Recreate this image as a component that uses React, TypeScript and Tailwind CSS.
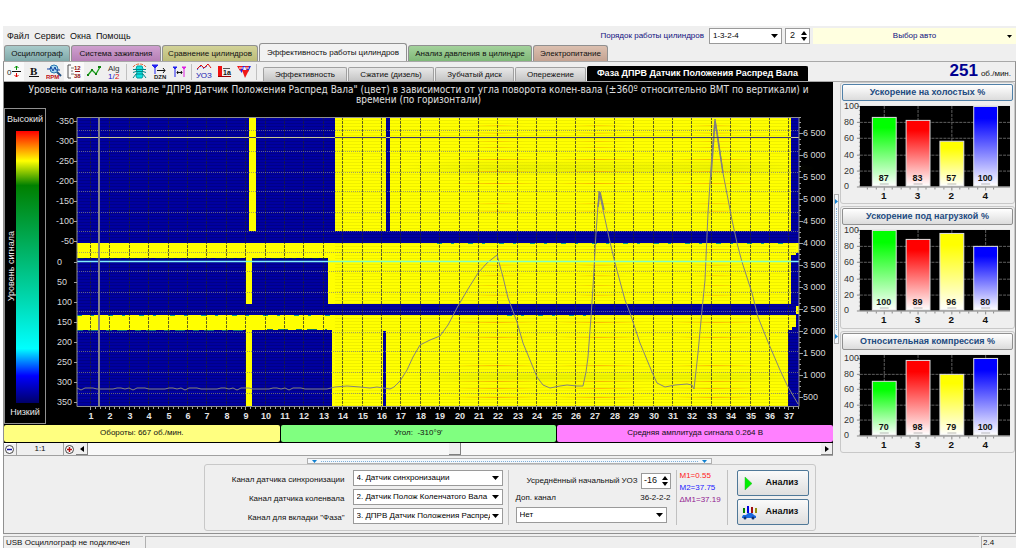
import React, { useId, useState } from "react";
import clsx from "clsx";

const NAVY = "#0000a0";

const mainTabs = [
  { label: "Осциллограф", className: "w-[66px] from-[#a9cbcb] to-[#7fa9a9]" },
  { label: "Система зажигания", className: "w-[90px] from-[#cfa0cf] to-[#b67fb6]" },
  { label: "Сравнение цилиндров", className: "w-[96px] from-[#d2d298] to-[#bcbc78]" },
  { label: "Эффективность работы цилиндров", className: "w-[148px]" },
  { label: "Анализ давления в цилиндре", className: "w-[124px] from-[#a4d29c] to-[#7fb878]" },
  { label: "Электропитание", className: "w-[75px] from-[#dcc0b0] to-[#c4a392]" },
];

const subTabs = [
  { label: "Эффективность", className: "w-[84px]" },
  { label: "Сжатие (дизель)", className: "w-[86px]" },
  { label: "Зубчатый диск", className: "w-[79px]" },
  { label: "Опережение", className: "w-[71px]" },
  { label: "Фаза ДПРВ Датчик Положения Распред Вала", className: "w-[221px]" },
];

/* ---------- toolbar icons ---------- */

const icons: { name: string; pressed?: boolean; sep?: boolean; art: React.ReactNode }[] = [
  {
    name: "Ноль",
    pressed: true,
    art: (
      <>
        <text x="1" y="12" fontSize="8" fill="#222">0</text>
        <path d="M6 8.500h9" stroke="#111" />
        <path d="M10.500 3v4M8.500 5l2-2 2 2" stroke="#009000" fill="none" />
        <path d="M10.500 10v4M8.500 12l2 2 2-2" stroke="#e00000" fill="none" />
      </>
    ),
  },
  {
    name: "Жирный",
    art: (
      <>
        <text x="4" y="12" fontSize="11" fontWeight="bold" fontFamily="Liberation Serif, serif" fill="#111">B</text>
        <path d="M3 13.5h10" stroke="#111" />
      </>
    ),
  },
  {
    name: "RPM",
    art: (
      <>
        <circle cx="8" cy="6" r="4" fill="#a8d8f0" stroke="#2878b0" />
        <path d="M1 6h3l1-2 2 4 2-4 1 3h4" stroke="#1040a0" fill="none" />
        <path d="M11 9l4 4" stroke="#205080" strokeWidth="2" />
        <text x="0" y="16" fontSize="6" fontWeight="bold" fill="#c01010">RPM</text>
      </>
    ),
  },
  {
    name: "Шкала",
    pressed: true,
    art: (
      <>
        <path d="M5 2H2v13h3" stroke="#555" fill="none" />
        <path d="M5 5h3M5 8h2M5 11h3" stroke="#777" />
        <text x="8" y="7" fontSize="6" fontWeight="bold" fill="#901010">12</text>
        <text x="8" y="15" fontSize="6" fontWeight="bold" fill="#901010">38</text>
        <path d="M9 8.5h5" stroke="#901010" />
      </>
    ),
  },
  {
    name: "График",
    art: (
      <>
        <path d="M2 12l4-5 4 4 4-7" stroke="#18a018" strokeWidth="1.3" fill="none" />
        <path d="M1 11h2v2H1zM5 6h2v2H5zM9 10h2v2H9zM12 3h3v2h-3z" fill="#108010" />
      </>
    ),
  },
  {
    name: "Алгоритм",
    sep: true,
    art: (
      <>
        <text x="2" y="8" fontSize="8" fill="#333">Alg</text>
        <text x="2" y="16" fontSize="8" fill="#1010d0">1/</text>
        <text x="9" y="16" fontSize="8" fill="#e01010">2</text>
      </>
    ),
  },
  {
    name: "Двигатель",
    art: (
      <>
        <path d="M6 3h5l1 3-1 3 1 4-1 2H6l-1-2 1-4-1-3z" fill="#10e0e0" stroke="#00a0a0" />
        <path d="M2 6.500h13M2 9.500l3-1h7l3 1M2 15l3-4h7l3 4" stroke="#008888" fill="none" />
        <path d="M2 4c3-4 10-4 13 0" stroke="#e06030" strokeDasharray="3 1" fill="none" />
      </>
    ),
  },
  {
    name: "Метка DZN",
    art: (
      <>
        <path d="M1 2h6L4 5zM4 5v6" fill="#2020f0" stroke="#2020f0" />
        <path d="M6 7.500h8M12 5l2 2.500-2 2.500" stroke="#111" fill="none" />
        <text x="3" y="16" fontSize="6" fontWeight="bold" fill="#222">DZN</text>
      </>
    ),
  },
  {
    name: "Интервал",
    sep: true,
    art: (
      <>
        <path d="M2 4h4L4 6zM4 6v8" fill="#2020f0" stroke="#2020f0" />
        <path d="M11 4h4l-2 2zM13 6v8" fill="#e020e0" stroke="#e020e0" />
        <path d="M6 9.500h5M7 8l-1 1.500L7 11M10 8l1 1.500-1 1.500" stroke="#111" fill="none" />
      </>
    ),
  },
  {
    name: "УОЗ",
    art: (
      <>
        <path d="M1 6l4-4 3 3 4-4 3 4" stroke="#e01010" fill="none" />
        <path d="M1 7l4-4 3 3 4-4" stroke="#4060e0" strokeDasharray="2 2" fill="none" />
        <text x="0" y="15" fontSize="8" fill="#1818b0">УОЗ</text>
      </>
    ),
  },
  {
    name: "Уровень",
    art: (
      <>
        <path d="M2 3h4v11H2z" fill="#f01010" />
        <path d="M2 13.500h13" stroke="#900" />
        <text x="7" y="12" fontSize="7" fontWeight="bold" fill="#111">1a</text>
        <path d="M7 5.500h7" stroke="#555" />
      </>
    ),
  },
  {
    name: "Фильтр",
    sep: true,
    art: (
      <>
        <path d="M2 3h7L5.500 10z" fill="#2020f0" />
        <path d="M8 3h7l-3 6z" fill="#2030e0" />
        <path d="M1 3h6L4 8zM6 7h7l-4 8zM9 3h4l-2 4z" fill="#f01818" />
        <path d="M3 5h10" stroke="#fff" />
      </>
    ),
  },
];

/* ---------- small controls ---------- */

function Select({ id, options, className }: { id: string; options: string[]; className?: string }) {
  return (
    <div className={clsx("relative h-4", className)}>
      <select
        id={id}
        className="h-full w-full appearance-none overflow-hidden border border-[#9a9a9a] bg-white pl-[3px] pr-3 text-[8px] leading-3 text-black whitespace-pre"
      >
        {options.map((o) => (
          <option key={o}>{o}</option>
        ))}
      </select>
      <svg className="pointer-events-none absolute right-1 top-[6px]" width="7" height="4" aria-hidden>
        <path d="M0 0h7L3.500 4z" fill="#000" />
      </svg>
    </div>
  );
}

function Spinner({ id, initial, className }: { id: string; initial: number; className?: string }) {
  const [value, setValue] = useState(initial);
  return (
    <div className={clsx("flex h-4 shrink-0 border border-[#9a9a9a] bg-white", className)}>
      <input
        id={id}
        aria-label={id}
        value={value}
        onChange={(e) => setValue(Number(e.target.value) || 0)}
        className="w-0 flex-1 text-center text-[9px]"
      />
      <div className="flex w-[10px] flex-col items-center justify-center gap-[2px]">
        <button aria-label="Больше" onClick={() => setValue(value + 1)}>
          <svg className="block" width="6" height="4"><path d="M0 4h6L3 0z" /></svg>
        </button>
        <button aria-label="Меньше" onClick={() => setValue(value - 1)}>
          <svg className="block" width="6" height="4"><path d="M0 0h6L3 4z" /></svg>
        </button>
      </div>
    </div>
  );
}

/* ---------- phase map ---------- */

const CYCLES = Array.from({ length: 37 }, (_, i) => i + 1);
const cycleX = (n: number) => Math.round(13 + (n - 1) * 19.4);

const GRID_Y = [13, 34, 55, 74, 95, 114, 135, 154, 175, 194, 215, 234, 255, 276];

// x, y, width, height
const lowZones = [
  [0, 0, 172, 126],
  [179, 0, 79, 126],
  [309, 0, 4, 114],
  [714, 0, 8, 126],
  [0, 114, 722, 12],
  [0, 141, 169, 57],
  [175, 141, 76, 46],
  [714, 138, 8, 49],
  [719, 136, 3, 10],
  [0, 187, 722, 11],
  [0, 213, 169, 76],
  [175, 213, 80, 76],
  [306, 214, 3, 75],
  [711, 213, 11, 76],
  [715, 210, 7, 3],
  [719, 198, 3, 12],
];

const highZones = [
  [719, 126, 3, 10],
  [719, 189, 3, 8],
  [251, 185, 1, 2],
];

const idle = Array.from({ length: 62 }, (_, i) => {
  const jitter = [0, 1, 0, 0, 1, 2, 1, 0, 1, 1, 0, 0, 1][(i * 5) % 13];
  return `${i * 4},${271 + jitter}`;
}).join(" ");

const rpmCurve =
  "250,272 258,270 270,269 283,270 293,271 300,270 313,272 317,270 323,264 330,253 336,240 343,228 353,223 363,219 371,208 381,189 391,172 401,156 410,146 420,138 426,160 431,181 440,205 446,226 460,260 466,268 473,271 483,269 490,268 500,269 506,269 509,255 511,240 514,200 516,170 519,116 522,74 526,93 533,125 538,146 548,183 553,196 563,226 575,255 580,266 588,270 598,268 610,267 615,268 617,272 621,236 625,193 628,163 631,96 635,36 638,2 641,20 646,56 655,103 660,126 665,145 675,176 681,200 691,225 703,253 710,268 721,287";

const glows = [420, 522, 638];

function PhaseMap() {
  return (
    <svg viewBox="0 0 787 316" className="block min-w-0 flex-1 bg-black" fontFamily="Liberation Sans, Arial, sans-serif" fontSize="9">
      <defs>
        <pattern id="rows" width="8" height="3" patternUnits="userSpaceOnUse">
          <rect width="8" height="1" fill="#909000" opacity="0.14" />
        </pattern>
        <pattern id="rowsBlue" width="8" height="3" patternUnits="userSpaceOnUse">
          <rect width="8" height="1" fill="#00003c" opacity="0.25" />
        </pattern>
        <radialGradient id="glow">
          <stop offset="0" stopColor="#ff9000" stopOpacity="0.6" />
          <stop offset="1" stopColor="#ff9000" stopOpacity="0" />
        </radialGradient>
        <radialGradient id="shade">
          <stop offset="0" stopColor="#a0c000" stopOpacity="0.2" />
          <stop offset="1" stopColor="#a0c000" stopOpacity="0" />
        </radialGradient>
      </defs>
      <g transform="translate(31 9)">
        <rect width="722" height="289" fill="#ffff00" />
        <rect x="258" width="464" height="289" fill="url(#rows)" />
        {glows.map((x) => (
          <g key={x}>
            {[42, 54, 66, 205, 220, 248, 264, 271, 280].map((y) => (
              <rect key={y} x={x - 46} y={y} width="92" height="1" fill="url(#glow)" />
            ))}
            {[8, 16, 24, 30, 86, 94, 132, 148, 158, 168, 178].map((y) => (
              <rect key={y} x={x - 28} y={y} width="56" height="1" fill="url(#glow)" opacity="0.6" />
            ))}
            <rect x={x - 100} y="42" width="200" height="18" fill="url(#shade)" />
            <rect x={x - 100} y="254" width="200" height="12" fill="url(#shade)" />
          </g>
        ))}
        {lowZones.map(([x, y, w, h]) => (
          <g key={`${x}-${y}`}>
            <rect x={x} y={y} width={w} height={h} fill={NAVY} />
            <rect x={x} y={y} width={w} height={h} fill="url(#rowsBlue)" />
          </g>
        ))}
        {highZones.map(([x, y, w, h]) => (
          <rect key={`${x}-${y}`} x={x} y={y} width={w} height={h} fill="#ffff00" />
        ))}
        <path d="M0 141.500h169M175 141.500h76" stroke="#002850" strokeDasharray="7 3 4 5 9 2" />
        <path d="M0 198.500h258M360 126.500h350M430 198.500h90" stroke="#10a080" strokeDasharray="5 9 3 14" />
        <path d="M0 213.500h169M190 212.500h60" stroke="#107070" strokeDasharray="6 5 10 8" />

        {CYCLES.map((n) => (
          <path key={n} d={`M${cycleX(n) + 0.5} 0v289`} stroke="#202030" strokeOpacity="0.7" strokeDasharray="3 1" />
        ))}
        {GRID_Y.map((y) => (
          <path key={y} d={`M0 ${y + 0.5}h722`} stroke="#808080" strokeOpacity="0.75" strokeDasharray="1 1" />
        ))}
        <polyline points={`${idle} ${rpmCurve}`} fill="none" stroke="#84847c" />
        <path d="M521 90l2-15 4 18M634 60l4-56 8 52" fill="none" stroke="#808080" strokeWidth="1.500" />

        <path d="M0 20.500h722" stroke="#3c3c70" />
        <path d="M0 20.500h172M179 20.500h79M309 20.500h4M714 20.500h8" stroke="#c8c890" />
        <path d="M0 144.500h722" stroke="#80ffc0" strokeWidth="1.500" />
        <path d="M0 144.500h169M175 144.500h76M714 144.500h8" stroke="#80f0ff" />
        <rect x="21" y="0" width="2" height="289" fill="#808088" />
        <path d="M0 289.500V.5h722v289z" fill="none" stroke="#909090" />

        {CYCLES.map((n) => (
          <g key={n}>
            <path d={`M${cycleX(n) + 0.5} 290v3M${cycleX(n) + 5.5} 290v2M${cycleX(n) + 10.5} 290v2${n < 37 ? `M${cycleX(n) + 15.5} 290v2` : ""}`} stroke="#a0a0a0" />
            <text x={cycleX(n) + 1} y="302" textAnchor="middle" fontWeight="bold" fill="#e4e4e4">{n}</text>
          </g>
        ))}
        {Array.from({ length: 15 }, (_, i) => -350 + i * 50).map((a) => {
          const y = Math.round(144.5 + a * 0.402);
          return (
            <g key={a}>
              <path d={`M-3 ${y + 0.5}h3`} stroke="#a0a0a0" />
              {a < 0 ? (
                <text x="-3" y={y + 3} textAnchor="end" fill="#d8d8d8">{a}</text>
              ) : (
                <text x="-20" y={y + 3} fill="#d8d8d8">{a}</text>
              )}
            </g>
          );
        })}
        {Array.from({ length: 13 }, (_, i) => 500 + i * 500).map((r) => {
          const y = Math.round(302 - r * 0.044);
          return (
            <g key={r}>
              <path d={`M722 ${y + 0.5}h4M722 ${y - 5.5}h2M722 ${y - 10.5}h2M722 ${y - 15.5}h2`} stroke="#a0a0a0" />
              <text x="726" y={y + 3} fill="#d8d8d8">
                {r >= 1000 ? `${Math.floor(r / 1000)} ${String(r % 1000).padStart(3, "0")}` : r}
              </text>
            </g>
          );
        })}
      </g>
    </svg>
  );
}

/* ---------- cylinder bar charts ---------- */

interface CylinderChartProps {
  title: string;
  values: number[];
  active?: boolean;
  headroom?: number;
}

const ORDER = ["1", "3", "2", "4"];
const BAR_COLORS = ["#00ff00", "#ff0000", "#ffff00", "#0000ff"];

function CylinderChart({ title, values, active, headroom = 0 }: CylinderChartProps) {
  const id = useId();
  const bottom = 84;
  const scale = (81 - headroom) / 100;
  return (
    <section className="rounded-[3px] border border-[#c8c8c8] px-px pt-px">
      <button
        className={clsx(
          "block h-[17px] w-full rounded-[2px] border bg-gradient-to-b from-white to-[#dcdcdc] text-[9px] leading-[15px] font-bold text-[#1c4a80]",
          active ? "border-[#5080a8]" : "border-[#909090]"
        )}
      >
        {title}
      </button>
      <svg viewBox="0 -2 172 103" className="block w-full overflow-visible" fontFamily="Liberation Sans, Arial, sans-serif" fontSize="9">
        <defs>
          {BAR_COLORS.map((c) => (
            <linearGradient key={c} id={id + c.slice(1)} x1="0" y1="0" x2="0" y2="1">
              <stop offset="0.150" stopColor={c} />
              <stop offset="1" stopColor="#fff" />
            </linearGradient>
          ))}
        </defs>
        <rect x="18" y="3" width="151" height="81" fill="#000" />
        {[0, 20, 40, 60, 80, 100].map((v) => {
          const y = Math.round(bottom - v * scale);
          return (
            <g key={v}>
              {v > 0 && v < 100 && <path d={`M18 ${y + 0.5}h151`} stroke="#606060" strokeDasharray="3 1" />}
              <path d={`M15 ${y + 0.5}h3`} stroke="#888" />
              <text x="2" y={y + 3} fill="#333">{v}</text>
            </g>
          );
        })}
        <path d="M17.500 3v82" stroke="#888" strokeDasharray="1 3" />
        <path d="M18 84.500h151" stroke="#777" />
        {values.map((v, i) => {
          const x = 30 + i * 34;
          const h = Math.round(v * scale);
          return (
            <g key={ORDER[i]}>
              <path d={`M${x + 12.5} 3v81`} stroke="#606060" strokeDasharray="3 1" />
              <rect x={x + 0.5} y={bottom - h + 0.5} width="24" height={h - 1} fill={`url(#${id + BAR_COLORS[i].slice(1)})`} stroke="#e0e0e0" />
              <text x={x + 12} y="78" textAnchor="middle" fontWeight="bold" fill="#111">{v}</text>
              <path d={`M${x + 8} 81.500h9`} stroke="#888" strokeOpacity="0.6" />
              <path d={`M${x + 12.5} 85v3M${x + 4.5} 85v2M${x + 20.5} 85v2M${x - 4.5} 85v2`} stroke="#888" />
              <text x={x + 12} y="97" textAnchor="middle" fontWeight="bold" fontSize="10" fill="#111">{ORDER[i]}</text>
            </g>
          );
        })}
      </svg>
    </section>
  );
}

/* ---------- lower settings ---------- */

const channels = [
  { id: "sync", label: "Канал датчика синхронизации", options: ["4.  Датчик синхронизации"] },
  { id: "crank", label: "Канал датчика коленвала", options: ["2.  Датчик Полож Коленчатого Вала"] },
  { id: "phase", label: 'Канал для вкладки "Фаза"', options: ["3.  ДПРВ Датчик Положения Распред Вала"] },
];

function AnalyzeButton({ children }: { children: React.ReactNode }) {
  return (
    <button className="flex h-[26px] w-[72px] items-center gap-2 rounded-[2px] border border-[#4f7898] bg-gradient-to-b from-[#fafafa] to-[#dedede] pl-[3px] text-[9px] font-bold">
      <svg width="17" height="17" viewBox="0 0 17 17" aria-hidden>{children}</svg>
      Анализ
    </button>
  );
}

function Settings() {
  return (
    <fieldset className="mx-auto flex h-[67px] w-[612px] rounded-[3px] border border-[#c8c8c8] pt-[5px]">
      <div className="flex flex-col gap-[3px] pl-2">
        {channels.map((c) => (
          <div key={c.id} className="flex h-4 items-center gap-2">
            <label htmlFor={c.id} className="w-[132px] pt-1 text-right leading-3 whitespace-nowrap">{c.label}</label>
            <Select id={c.id} options={c.options} className="w-[150px]" />
          </div>
        ))}
      </div>
      <div className="ml-[5px] h-[55px] w-px bg-[#c0c0c0]" />
      <div className="flex w-[162px] flex-col pl-[7px] pt-[3px]">
        <div className="flex h-4 items-center justify-end gap-[3px]">
          <label htmlFor="uoz" className="whitespace-nowrap">Усреднённый начальный УОЗ</label>
          <Spinner id="uoz" initial={-16} className="w-[30px]" />
        </div>
        <div className="flex h-[18px] items-center justify-between">
          <label htmlFor="extra">Доп. канал</label>
          <span>36-2-2-2</span>
        </div>
        <Select id="extra" options={["Нет"]} className="mr-1" />
      </div>
      <div className="ml-[5px] h-[55px] w-px bg-[#c0c0c0]" />
      <div className="w-[50px] pl-[3px] leading-3 whitespace-nowrap">
        <p className="text-[#ff2020]">M1=0.55</p>
        <p className="text-[#2020ff]">M2=37.75</p>
        <p className="text-[#902090]">ΔM1=37.19</p>
      </div>
      <div className="h-[55px] w-px bg-[#c0c0c0]" />
      <div className="flex flex-col gap-[3px] pl-[9px]">
        <AnalyzeButton>
          <path d="M4 2v13l7-6.500z" fill="#00f000" stroke="#30b030" strokeWidth="0.500" />
        </AnalyzeButton>
        <AnalyzeButton>
          <path d="M2 4h2v5H2z" fill="#008000" />
          <path d="M6 2h2v7H6z" fill="#0000e0" />
          <path d="M10 3h2v6h-2z" fill="#a01010" />
          <path d="M14 4h2v5h-2z" fill="#909010" />
          <path d="M1 13l1-2h3l2-2h4l2 2 2 1v2H1z" fill="#1868e0" />
          <circle cx="4" cy="14" r="1.500" fill="#103070" />
          <circle cx="12" cy="14" r="1.500" fill="#103070" />
        </AnalyzeButton>
      </div>
    </fieldset>
  );
}

export default function App() {
  const [tab, setTab] = useState(3);
  const [subTab, setSubTab] = useState(4);

  return (
    <div className="flex min-h-screen flex-col bg-white pt-[26px] pr-2 pb-[3px] pl-[3px] font-['Liberation_Sans',Arial,sans-serif] text-[8px] text-[#101010]">
      <div className="flex flex-1 flex-col bg-[#efefef]">
        <header className="flex h-[17px] items-center">
          <nav className="flex gap-[5px] pl-1 pt-1 text-[9px]">
            {["Файл", "Сервис", "Окна", "Помощь"].map((m) => (
              <button key={m}>{m}</button>
            ))}
          </nav>
          <div className="ml-auto flex items-center gap-[3px] pt-[2px]">
            <label htmlFor="order" className="text-[#101080] whitespace-nowrap">Порядок работы цилиндров</label>
            <Select id="order" options={["1-3-2-4"]} className="ml-[2px] w-[73px]" />
            <Spinner id="strokes" initial={2} className="w-[25px]" />
            <button className="relative h-4 w-[203px] bg-[#ffffe0] text-[#101080]">
              Выбор авто
              <svg className="absolute right-1 top-[7px]" width="5" height="3" aria-hidden>
                <path d="M0 0h5L2.500 3z" fill="#000" />
              </svg>
            </button>
          </div>
        </header>

        <div className="flex h-[18px] items-end gap-px pl-px">
          {mainTabs.map((t, i) => (
            <button
              key={t.label}
              onClick={() => setTab(i)}
              className={clsx(
                "shrink-0 rounded-t-[3px] border border-b-0 border-[#909090] whitespace-nowrap",
                t.className,
                i === tab ? "h-[18px] bg-[#f2f2f2]" : "h-4 bg-gradient-to-b"
              )}
            >
              {t.label}
            </button>
          ))}
        </div>

        <main className="flex flex-1 flex-col border border-[#909090] border-t-[#a8a8a8]">
          <div className="flex h-[20px] items-end border-b border-[#a8a8a8]">
            <div className="flex h-[19px] items-center">
              {icons.map((ic) => (
                <React.Fragment key={ic.name}>
                  <button aria-label={ic.name} className={clsx("flex h-[19px] w-5 items-center justify-center", ic.pressed && "bg-[#fafafa]")}>
                    <svg width="17" height="17" viewBox="0 0 17 17">{ic.art}</svg>
                  </button>
                  {ic.sep && <div className="mx-[2px] h-4 w-px bg-[#c0c0c0]" />}
                </React.Fragment>
              ))}
            </div>
            <div className="flex items-end gap-px pl-1">
              {subTabs.map((t, i) => (
                <button
                  key={t.label}
                  onClick={() => setSubTab(i)}
                  className={clsx(
                    "rounded-t-[2px] border border-b-0 whitespace-nowrap",
                    t.className,
                    i === subTab
                      ? "h-[15px] border-black bg-black text-[9px] font-bold text-white"
                      : "h-[14px] border-[#a0a0a0] bg-gradient-to-b from-[#e8e8e8] to-[#c4c4c4]"
                  )}
                >
                  {t.label}
                </button>
              ))}
            </div>
            <div className="ml-auto flex items-baseline gap-[3px] pr-1">
              <b className="text-[17px] leading-5 text-[#000090]">251</b>
              <span>об./мин.</span>
            </div>
          </div>

          <div className="flex">
            <div className="flex min-w-0 flex-1 flex-col">
              <div className="bg-black">
                <h1 className="h-[26px] px-4 pt-[3px] text-center font-['DejaVu_Sans_Condensed','DejaVu_Sans',sans-serif] text-[10px] leading-[10px] text-[#e0e0e0]">
                  Уровень сигнала на канале "ДПРВ Датчик Положения Распред Вала" (цвет) в зависимости от угла поворота колен-вала (±360º относительно ВМТ по вертикали) и времени (по горизонтали)
                </h1>
                <div className="flex">
                  <div className="flex w-[42px] flex-col items-center justify-between border border-[#909090] py-1 text-[9px] text-[#e8e8e8]">
                    <span>Высокий</span>
                    <div className="flex flex-1 items-center pt-1 pb-[3px]">
                      <span className="w-[10px] rotate-180 text-center leading-[10px] whitespace-nowrap [writing-mode:vertical-rl]">Уровень сигнала</span>
                      <div className="mr-[6px] h-full w-[23px] bg-[linear-gradient(#ff0000,#ffff00_11%,#008000_20%,#00d8b0_62%,#00ffff_80%,#0000ff_90%,#000068)]" />
                    </div>
                    <span>Низкий</span>
                  </div>
                  <PhaseMap />
                </div>
                <div className="grid h-[19px] grid-cols-3 gap-px py-px text-center leading-4">
                  <div className="rounded-[2px] bg-[#ffff80]">Обороты: 667 об./мин.</div>
                  <div className="rounded-[2px] bg-[#80ff80]">Угол:&nbsp; -310°9'</div>
                  <div className="rounded-[2px] bg-[#ff80ff]">Средняя амплитуда сигнала 0.264 В</div>
                </div>
              </div>
              <div className="flex h-[13px] items-center border-b border-[#a0a0a0] bg-white">
                <button aria-label="Уменьшить" className="w-3 bg-[#efefef]">
                  <svg width="11" height="11" className="block">
                    <circle cx="5.500" cy="5.500" r="4" fill="#fff" stroke="#444" />
                    <path d="M3 5.500h5" stroke="#1010a0" strokeWidth="1.500" />
                  </svg>
                </button>
                <span className="w-12 border-x border-[#a0a0a0] bg-[#efefef] text-center leading-3">1:1</span>
                <button aria-label="Увеличить" className="w-3 bg-[#efefef]">
                  <svg width="11" height="11" className="block">
                    <circle cx="5.500" cy="5.500" r="4" fill="#fff" stroke="#444" />
                    <path d="M3 5.500h5M5.500 3v5" stroke="#b01010" strokeWidth="1.500" />
                  </svg>
                </button>
                <button aria-label="Влево" className="flex h-3 w-3 items-center justify-center border-r border-b border-[#808080] bg-[#efefef]">
                  <svg width="4" height="6"><path d="M4 0v6L0 3z" /></svg>
                </button>
                <div className="flex h-3 flex-1 justify-center bg-[#f8f8f8]">
                  <div className="h-3 w-3 border-r border-b border-[#808080] bg-[#efefef]" />
                </div>
                <button aria-label="Вправо" className="flex h-3 w-3 items-center justify-center border-r border-b border-[#808080] bg-[#efefef]">
                  <svg width="4" height="6"><path d="M0 0v6l4-3z" /></svg>
                </button>
              </div>
            </div>

            <div className="flex w-[7px] items-center pl-px">
              <div className="flex h-[150px] w-[5px] flex-col items-center justify-between border border-[#b0b0b0] bg-[#f4f8fc] py-1">
                <svg width="3" height="5"><path d="M0 0v5l3-2.500z" fill="#1080d0" /></svg>
                <div className="my-1 w-0 flex-1 border-l border-dotted border-[#80b0d8]" />
                <svg width="3" height="5"><path d="M0 0v5l3-2.500z" fill="#1080d0" /></svg>
              </div>
            </div>

            <aside className="flex w-[175px] flex-col gap-[2px]">
              <CylinderChart title="Ускорение на холостых %" values={[87, 83, 57, 100]} active />
              <CylinderChart title="Ускорение под нагрузкой %" values={[100, 89, 96, 80]} />
              <CylinderChart title="Относительная компрессия %" values={[70, 98, 79, 100]} headroom={3} />
            </aside>
          </div>

          <div className="mx-auto mt-[2px] flex h-[6px] w-[405px] items-center justify-between border border-[#b0b0b0] bg-[#f4f8fc] px-1">
            <svg width="5" height="3"><path d="M0 0h5L2.500 3z" fill="#1080d0" /></svg>
            <div className="mx-1 h-0 flex-1 border-t border-dotted border-[#80b0d8]" />
            <svg width="5" height="3"><path d="M0 0h5L2.500 3z" fill="#1080d0" /></svg>
          </div>
          <Settings />
        </main>

        <footer className="flex h-[14px] gap-[2px] pt-[2px] leading-3">
          <div className="w-[140px] border-t border-l border-[#b0b0b0] pl-[2px] whitespace-nowrap">USB Осциллограф не подключен</div>
          <div className="flex-1 border-t border-l border-[#b0b0b0]" />
          <div className="w-[35px] border-t border-l border-[#b0b0b0] pl-px">2.4</div>
        </footer>
      </div>
    </div>
  );
}
